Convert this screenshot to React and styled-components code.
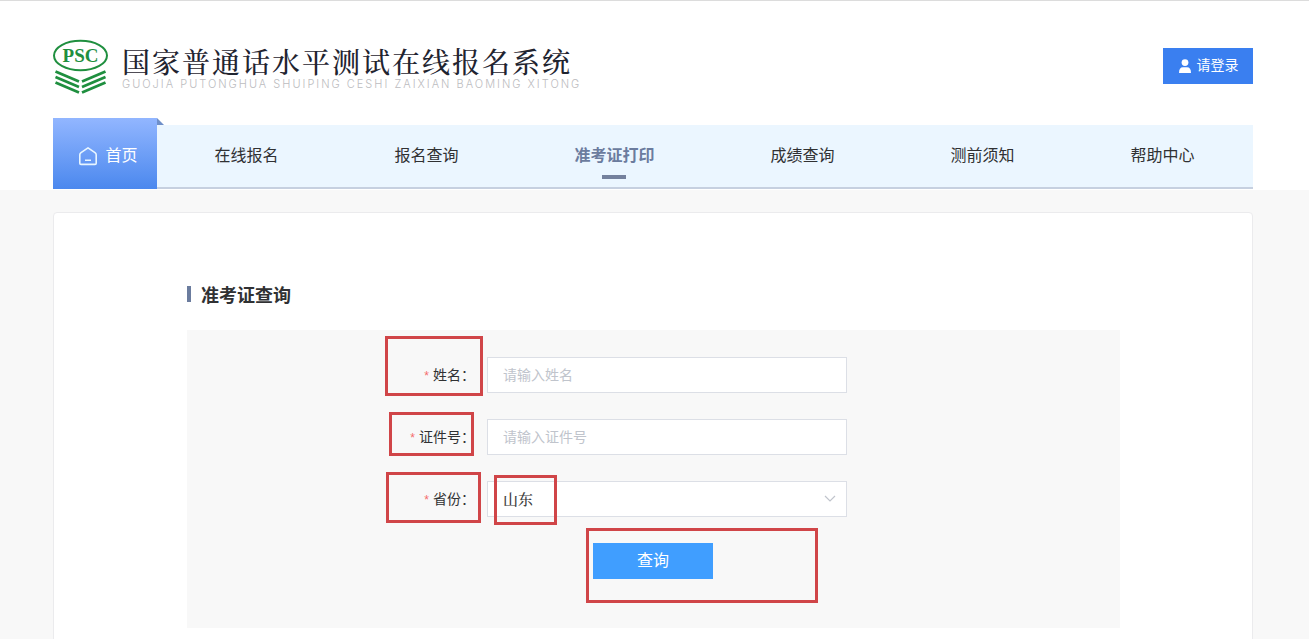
import React from "react";
import styled, { createGlobalStyle } from "styled-components";

const GlobalStyle = createGlobalStyle`
  *, *::before, *::after { box-sizing: border-box; }
  body {
    margin: 0;
    background: #f8f8f8;
    color: #303133;
    font-family: "Noto Sans CJK SC", "Liberation Sans", sans-serif;
    font-size: 14px;
  }
  button, input, select { font-family: inherit; }
`;

const Header = styled.header`
  padding: 0 56px 0 53px;
  border-top: 1px solid #dcdcdc;
  border-bottom: 1px solid #fff;
  background: #fff;
`;

const Brand = styled.div`
  display: flex;
  align-items: center;
  height: 117px;
  padding-bottom: 8px;
  padding-top: 20px;
`;

const BrandText = styled.div`
  flex: 1;
  margin-left: 13px;
  padding-top: 2px;
  white-space: nowrap;
`;

const SiteName = styled.h1`
  margin: 0;
  color: #1f2430;
  font-family: "Noto Serif CJK SC", "Noto Sans CJK SC", serif;
  font-size: 28px;
  font-weight: 500;
  line-height: 34px;
  letter-spacing: 2px;
`;

const Pinyin = styled.p`
  margin: 0;
  color: #bcbcc0;
  font-family: Inter, "Liberation Sans", sans-serif;
  font-size: 11px;
  font-weight: 300;
  line-height: 12px;
  letter-spacing: 2px;
`;

const LoginButton = styled.button`
  display: flex;
  align-items: center;
  justify-content: center;
  gap: 5px;
  width: 90px;
  height: 36px;
  padding: 0;
  border: 0;
  background: #3a7ff0;
  color: #fff;
  font-size: 14px;
`;

const ButtonText = styled.span`
  padding-bottom: 3px;
`;

const Nav = styled.nav`
  display: flex;
  align-items: flex-end;
`;

const HomeLink = styled.a`
  position: relative;
  display: flex;
  align-items: center;
  justify-content: center;
  gap: 7px;
  width: 104px;
  height: 71px;
  padding: 4px 0 0 6px;
  background: linear-gradient(#92b6ff, #4b88ee);
  color: #fff;
  font-size: 16px;
  text-decoration: none;

  &::after {
    content: "";
    position: absolute;
    top: 0;
    left: 100%;
    border-bottom: 7px solid #6f8fc9;
    border-right: 7px solid transparent;
  }
`;

const Menu = styled.div`
  display: flex;
  flex: 1;
  height: 64px;
  border-bottom: 2px solid #c6d0e0;
  background: #ebf6ff;
`;

const MenuLink = styled.a`
  position: relative;
  display: flex;
  flex: 1 1 auto;
  align-items: center;
  justify-content: center;
  padding: 0 1px 5px 0;
  color: ${(p) => (p.$active ? "#6b7c9e" : "#303133")};
  font-size: 16px;
  font-weight: ${(p) => (p.$active ? 700 : 400)};
  text-decoration: none;
  white-space: nowrap;

  &::after {
    content: "";
    display: ${(p) => (p.$active ? "block" : "none")};
    position: absolute;
    bottom: 8px;
    left: 50%;
    width: 24px;
    height: 4px;
    margin-left: -13px;
    background: #74819d;
  }
`;

const Card = styled.main`
  margin: 22px 56px 0 53px;
  padding: 70px 132px 48px 133px;
  border: 1px solid #ebebed;
  border-radius: 4px;
  background: #fff;
`;

const SectionTitle = styled.h2`
  display: flex;
  align-items: center;
  gap: 10px;
  margin: 0 0 25px;
  font-size: 18px;
  font-weight: 700;
  line-height: 22px;

  &::before {
    content: "";
    width: 4px;
    height: 16px;
    background: #6b7c9e;
  }
`;

const Panel = styled.div`
  padding: 27px 0 49px;
  background: #f8f8f8;
`;

const Form = styled.form`
  width: 561px;
  margin: 0 auto;
`;

const Field = styled.div`
  display: grid;
  grid-template-columns: 114px 360px;
  height: 36px;
  margin-bottom: 26px;
`;

const Label = styled.label`
  position: relative;
  padding-right: 12px;
  line-height: 34px;
  text-align: right;
`;

const Required = styled.span`
  margin-right: 4px;
  color: #f56c6c;
  font-family: "Liberation Sans", sans-serif;
  font-size: 12px;
`;

const Control = styled.div`
  position: relative;
`;

const TextInput = styled.input`
  display: block;
  width: 100%;
  height: 36px;
  padding: 0 15px 2px;
  border: 1px solid #dcdfe6;
  border-radius: 0;
  outline: 0;
  background: #fff;
  font-size: 14px;

  &::placeholder { color: #c0c4cc; opacity: 1; }
`;

const Select = styled.select`
  display: block;
  width: 100%;
  height: 36px;
  padding: 0 15px 2px;
  border: 1px solid #dcdfe6;
  border-radius: 0;
  outline: 0;
  appearance: none;
  background: #fff;
  color: #404040;
  font-family: "Noto Serif CJK SC", "Noto Sans CJK SC", serif;
  font-size: 15px;
  font-weight: 500;
`;

const Arrow = styled.svg`
  position: absolute;
  top: 14px;
  right: 11px;
  pointer-events: none;
`;

const Actions = styled.div`
  display: flex;
  padding-left: 220px;
`;

const SubmitWrap = styled.div`
  position: relative;
`;

const Submit = styled.button`
  display: block;
  width: 120px;
  height: 36px;
  padding: 0 0 5px;
  border: 0;
  background: #409eff;
  color: #fff;
  font-size: 16px;
`;

const Highlight = styled.span`
  position: absolute;
  top: ${(p) => p.$top}px;
  left: ${(p) => p.$left}px;
  width: ${(p) => p.$width}px;
  height: ${(p) => p.$height}px;
  border: 3px solid #d04548;
  pointer-events: none;
`;

const menu = ["在线报名", "报名查询", "准考证打印", "成绩查询", "测前须知", "帮助中心"];

function Logo() {
  return (
    <svg width="56" height="56" viewBox="0 0 56 56" role="img" aria-label="PSC">
      <ellipse cx="27.5" cy="17.5" rx="26.5" ry="14.8" fill="#fff" stroke="#1f8f3f" strokeWidth="2" />
      <text x="27.5" y="23.5" textAnchor="middle" fill="#1f8f3f" fontFamily="Liberation Serif, serif" fontWeight="700" fontSize="19">PSC</text>
      <g fill="none" stroke="#1f8f3f" strokeWidth="2.8">
        <path d="M2.5 33.5 L26 43.5M2.5 39 L26 49M2.5 44.5 L26 54.5" />
        <path d="M52.5 33.5 L29 43.5M52.5 39 L29 49M52.5 44.5 L29 54.5" />
      </g>
    </svg>
  );
}

export default function App() {
  return (
    <>
      <GlobalStyle />
      <Header>
        <Brand>
          <Logo />
          <BrandText>
            <SiteName>国家普通话水平测试在线报名系统</SiteName>
            <Pinyin>GUOJIA PUTONGHUA SHUIPING CESHI ZAIXIAN BAOMING XITONG</Pinyin>
          </BrandText>
          <LoginButton type="button">
            <svg width="14" height="14" viewBox="0 0 14 14" fill="#fff" aria-hidden="true">
              <circle cx="7" cy="3.6" r="3.4" />
              <path d="M1 14Q1 8.2 5 8.2H9Q13 8.2 13 14Z" />
            </svg>
            <ButtonText>请登录</ButtonText>
          </LoginButton>
        </Brand>
        <Nav>
          <HomeLink href="#home">
            <svg width="20" height="20" viewBox="0 0 20 20" fill="none" stroke="#e8f6ff" strokeWidth="1.6" strokeLinejoin="round" aria-hidden="true">
              <path d="M10 1.8 17 6.6Q18.2 7.5 18.2 8.8V17.2Q18.2 18.4 17 18.4H3Q1.8 18.4 1.8 17.2V8.8Q1.8 7.5 3 6.6ZM7 14.3h6" />
            </svg>
            <ButtonText>首页</ButtonText>
          </HomeLink>
          <Menu>
            {menu.map((name, i) => (
              <MenuLink key={name} href={`#menu-${i}`} $active={i === 2}>{name}</MenuLink>
            ))}
          </Menu>
        </Nav>
      </Header>
      <Card>
        <SectionTitle>准考证查询</SectionTitle>
        <Panel>
          <Form>
            <Field>
              <Label htmlFor="name">
                <Required>*</Required>姓名：
                <Highlight $top={-21} $left={12} $width={98} $height={60} />
              </Label>
              <TextInput id="name" placeholder="请输入姓名" />
            </Field>
            <Field>
              <Label htmlFor="card">
                <Required>*</Required>证件号：
                <Highlight $top={-7} $left={16} $width={85} $height={44} />
              </Label>
              <TextInput id="card" placeholder="请输入证件号" />
            </Field>
            <Field>
              <Label htmlFor="province">
                <Required>*</Required>省份：
                <Highlight $top={-9} $left={13} $width={95} $height={51} />
              </Label>
              <Control>
                <Select id="province" defaultValue="山东">
                  <option>山东</option>
                </Select>
                <Arrow width="12" height="8" viewBox="0 0 12 8" fill="none" stroke="#c0c4cc" strokeWidth="1.2" aria-hidden="true">
                  <path d="M1 1l5 5 5-5" />
                </Arrow>
                <Highlight $top={-6} $left={7} $width={63} $height={50} />
              </Control>
            </Field>
            <Actions>
              <SubmitWrap>
                <Submit type="button">查询</Submit>
                <Highlight $top={-15} $left={-7} $width={232} $height={75} />
              </SubmitWrap>
            </Actions>
          </Form>
        </Panel>
      </Card>
    </>
  );
}
